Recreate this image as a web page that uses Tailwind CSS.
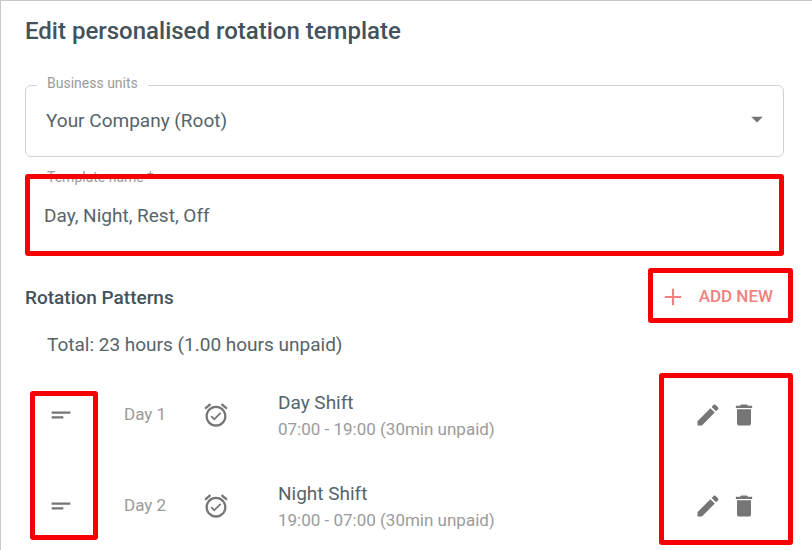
<!DOCTYPE html>
<html lang="en">
<head>
<meta charset="utf-8">
<meta name="viewport" content="width=device-width, initial-scale=1">
<title>Edit personalised rotation template</title>
<script src="https://cdn.jsdelivr.net/npm/@tailwindcss/browser@4"></script>
</head>
<body class="bg-white">
<svg class="hidden" aria-hidden="true">
  <symbol id="drag" viewBox="0 0 24 24"><path d="M4 9h16v2H4zM4 13h10v2H4z"/></symbol>
  <symbol id="alarm" viewBox="0 0 24 24"><path d="M22 5.72l-4.6-3.86-1.29 1.53 4.6 3.86L22 5.72zM7.88 3.39L6.6 1.86 2 5.71l1.29 1.53 4.59-3.85zM12 4c-4.97 0-9 4.03-9 9s4.02 9 9 9c4.97 0 9-4.03 9-9s-4.03-9-9-9zm0 16c-3.87 0-7-3.13-7-7s3.13-7 7-7 7 3.13 7 7-3.13 7-7 7zm-1.46-5.47L8.41 12.4l-1.06 1.06 3.18 3.18 6-6-1.06-1.06-4.93 4.95z"/></symbol>
  <symbol id="pencil" viewBox="0 0 24 24"><path d="M3 17.25V21h3.75L17.81 9.94l-3.75-3.75L3 17.25zM20.71 7.04c.39-.39.39-1.02 0-1.41l-2.34-2.34c-.39-.39-1.02-.39-1.41 0l-1.83 1.83 3.75 3.75 1.83-1.83z"/></symbol>
  <symbol id="trash" viewBox="0 0 24 24"><path d="M6 19c0 1.1.9 2 2 2h8c1.1 0 2-.9 2-2V7H6v12zM19 4h-3.5l-1-1h-5l-1 1H5v2h14V4z"/></symbol>
  <symbol id="plus" viewBox="0 0 24 24"><path d="M19 12.9h-6.1V19h-1.8v-6.1H5v-1.8h6.1V5h1.8v6.1H19z"/></symbol>
  <symbol id="caret" viewBox="0 0 24 24"><path d="M7 10l5 5 5-5z"/></symbol>
</svg>
<main class="relative min-h-screen border-t border-l border-[#c8c8c8] pt-[14px] pr-7 pl-6 font-['Roboto',sans-serif] text-[#56646a]">
  <h1 class="text-2xl leading-8 font-medium text-[#44525a]">Edit personalised rotation template</h1>

  <form>
    <fieldset class="relative mt-7 rounded-md border border-[#d3d3d3] pb-[9px]">
      <legend class="ml-[11px] px-[10px] pb-1 text-sm leading-4 text-[#9b9b9b]"><label for="unit">Business units</label></legend>
      <select id="unit" class="block h-13 w-full appearance-none bg-transparent px-5 text-[19px] outline-none">
        <option>Your Company (Root)</option>
      </select>
      <svg class="pointer-events-none absolute top-[10px] right-3 size-7 fill-[#757575]"><use href="#caret"/></svg>
    </fieldset>

    <div class="relative mt-[11px]">
      <fieldset class="border border-transparent pb-[11px]">
        <legend class="ml-[11px] px-[10px] pb-[2px] text-sm leading-[18px] text-[#9b9b9b]"><label for="name">Template name *</label></legend>
        <input id="name" type="text" value="Day, Night, Rest, Off" class="block h-[54px] w-full bg-transparent px-[18px] text-[19px] outline-none">
      </fieldset>
      <div class="pointer-events-none absolute top-[6px] right-0 -bottom-[2px] left-0 rounded-[3px] border-5 border-[#f60000]"></div>
    </div>

    <div class="mt-[14px] -mr-[9px] flex items-center justify-between">
      <h2 class="pt-1 text-[19px] leading-6 font-medium text-[#44525a]">Rotation Patterns</h2>
      <button type="button" class="flex h-[55px] items-center gap-3 rounded-[3px] border-5 border-[#f60000] pt-[3px] pr-[15px] pl-[6px] text-[17px] font-medium text-[#f47f7f]">
        <svg class="size-7 fill-current"><use href="#plus"/></svg>ADD NEW
      </button>
    </div>
    <p class="mt-[10px] ml-[22px] text-[19px] leading-6">Total: 23 hours (1.00 hours unpaid)</p>

    <div class="relative mt-[34px]">
      <ul class="flex flex-col gap-[43px] pl-[22px]">
        <li class="flex h-12 items-center">
          <button type="button" aria-label="Move day 1" class="w-[77px]"><svg class="size-7 fill-[#757575]"><use href="#drag"/></svg></button>
          <span class="w-[78px] text-[17px] text-[#9b9b9b]">Day 1</span>
          <svg class="mr-12 size-7 fill-[#757575]"><use href="#alarm"/></svg>
          <div class="grow">
            <p class="text-[19px] leading-7">Day Shift</p>
            <p class="text-[17px] leading-6 text-[#9b9b9b]">07:00 - 19:00 (30min unpaid)</p>
          </div>
          <div class="flex gap-2 pr-[26px]">
            <button type="button" aria-label="Edit day 1"><svg class="size-7 fill-[#757575]"><use href="#pencil"/></svg></button>
            <button type="button" aria-label="Delete day 1"><svg class="size-7 fill-[#757575]"><use href="#trash"/></svg></button>
          </div>
        </li>
        <li class="flex h-12 items-center">
          <button type="button" aria-label="Move day 2" class="w-[77px]"><svg class="size-7 fill-[#757575]"><use href="#drag"/></svg></button>
          <span class="w-[78px] text-[17px] text-[#9b9b9b]">Day 2</span>
          <svg class="mr-12 size-7 fill-[#757575]"><use href="#alarm"/></svg>
          <div class="grow">
            <p class="text-[19px] leading-7">Night Shift</p>
            <p class="text-[17px] leading-6 text-[#9b9b9b]">19:00 - 07:00 (30min unpaid)</p>
          </div>
          <div class="flex gap-2 pr-[26px]">
            <button type="button" aria-label="Edit day 2"><svg class="size-7 fill-[#757575]"><use href="#pencil"/></svg></button>
            <button type="button" aria-label="Delete day 2"><svg class="size-7 fill-[#757575]"><use href="#trash"/></svg></button>
          </div>
        </li>
      </ul>
      <div class="pointer-events-none absolute top-0 -bottom-[10px] left-[5px] w-17 rounded-[3px] border-5 border-[#f60000]"></div>
      <div class="pointer-events-none absolute -top-[18px] -right-[9px] -bottom-[15px] w-[134px] rounded-[3px] border-5 border-[#f60000]"></div>
    </div>
  </form>
</main>
</body>
</html>
